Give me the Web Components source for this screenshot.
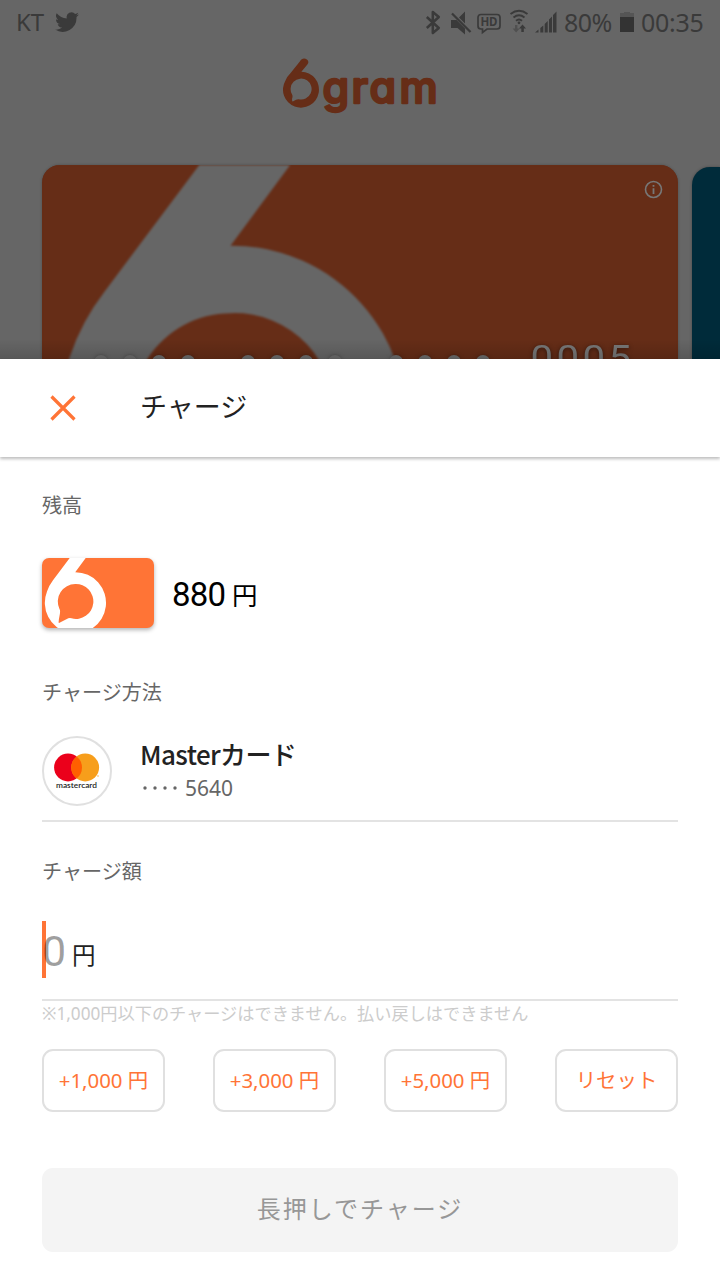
<!DOCTYPE html>
<html lang="ja">
<head>
<meta charset="utf-8">
<title>6gram</title>
<style>
body {
    margin: 0;
    background: #fff;
    color: #222;
    font-family: "Noto Sans", "Noto Sans CJK JP", sans-serif;
}
</style>
</head>
<body>
<charge-app></charge-app>

<script>
function define(name, html) {
    const template = document.createElement('template');
    template.innerHTML = html;
    customElements.define(name, class extends HTMLElement {
        constructor() {
            super();
            this.attachShadow({ mode: 'open' }).appendChild(template.content.cloneNode(true));
        }
    });
}

define('status-bar', `
<style>
:host {
    display: flex;
    align-items: center;
    height: 46px;
    padding: 0 16px;
    color: #3a3a3a;
    font-size: 25px;
    line-height: 44px;
}
svg { display: block; fill: currentColor; flex: none; }
span { height: 46px; white-space: nowrap; }
.carrier { width: 39px; font-size: 24px; }
.bird, .battery { margin-top: -2px; }
.space { flex: 1; }
.percent { margin-left: 1.5px; width: 56px; letter-spacing: -.5px; }
.time { margin-left: 7px; width: 63px; letter-spacing: -.3px; }
</style>
<span class="carrier">KT</span>
<svg class="bird" width="24" height="22" viewBox="0 0 24 22"><path d="M24 3.6a10 10 0 0 1-2.8.8 5 5 0 0 0 2.1-2.7 9 9 0 0 1-3.1 1.2 4.9 4.9 0 0 0-8.4 4.5A14 14 0 0 1 1.700 2.200a4.900 4.900 0 0 0 1.500 6.600A5 5 0 0 1 1 8.200a4.900 4.900 0 0 0 3.900 4.900 5 5 0 0 1-2.200.1 4.900 4.900 0 0 0 4.600 3.400A10 10 0 0 1 0 18.600 14 14 0 0 0 21.500 6.100 10 10 0 0 0 24 3.600z"/></svg>
<span class="space"></span>
<svg width="138" height="30" viewBox="0 0 138 30">
    <g fill="none" stroke="#3a3a3a" stroke-width="2.500">
        <path d="M1.800 9l12 11-6 5V4l6 5-12 11" stroke-linejoin="round"/>
        <path d="M27 5.500l18.500 18.500" stroke-width="2.300"/>
        <path d="M56 6.500h16q3 0 3 3v8.500q0 3-3 3H62l-4.500 3.500v-3.500H56q-3 0-3-3v-8.500q0-3 3-3z" stroke-width="1.700"/>
        <path d="M85.500 6q8.500-6.500 17 0M88.500 9.500q5.500-4.500 11 0M91 12.700q3-2.500 6 0" stroke-width="1.900"/>
    </g>
    <path d="M26 12h5.500l8.500 8.500v6l-7.500-6.500H26zM34 9.500l6-6v12z"/>
    <circle cx="94" cy="14.800" r="1.400"/>
    <path d="M96.300 24v-3.500H94l3.500-4 3.500 4h-2.200V24z"/>
    <path fill="#505050" d="M90 17h2.400v3.500h2.200l-3.500 4-3.500-4H90z"/>
    <path d="M110 24.500l3.500-3v3zM115.300 20l3-2.500v7h-3zM119.700 16l3-3v11.500h-3zM124 11.500l3-3v16h-3zM128 7l3.500-3.500v21H128z"/>
    <text x="64" y="18" text-anchor="middle" font-size="11.500" font-weight="700" font-family="Noto Sans" textLength="17">HD</text>
</svg>
<span class="percent">80%</span>
<svg class="battery" width="14" height="20" viewBox="0 0 14 20"><path fill="#555" d="M0 1h4V0h6v1h4v4H0z"/><path fill="#333" d="M0 5h14v15H0z"/></svg>
<span class="time">00:35</span>
`);

define('brand-logo', `
<style>
:host { display: block; height: 62px; text-align: center; }
svg { display: block; margin: 0 auto; }
text {
    font-family: Inter, "Noto Sans", sans-serif;
    font-weight: 500;
    font-feature-settings: "cv11" 1;
}
</style>
<svg width="160" height="62" viewBox="280 57 160 62" fill="#662d17">
    <g transform="translate(281.500 63.300) scale(.588)">
        <path fill-rule="evenodd" d="M31.500-3.500C35-11 45-8.500 45.700-2Q45.700 0 44 2L33.800 14.200A30.600 30.600 0 1 1 6.600 29.500Q9 23 15.500 16.500zM20.500 31.500A17.800 17.800 0 0 0 18 53Q19.500 55 18 60.500Q17.500 66 20 64.500Q26 60.500 29 61A17.800 17.800 0 1 0 20.500 31.500z"/>
    </g>
    <text x="322.500 351.500 369.500 399.500" y="102.500" font-size="43" stroke="#662d17" stroke-width="2.400" stroke-linejoin="round">gram</text>
</svg>
`);

// the cropped "6" with a speech bubble for its counter
define('card-art', `
<style>
:host { display: block; overflow: hidden; background: var(--card, #ff7436); }
svg { display: block; width: 100%; aspect-ratio: 112 / 70; fill: var(--mark, #fff); }
</style>
<svg viewBox="0 0 112 70">
    <path fill-rule="evenodd" d="M27.700 0H43.700L33.200 14.200A30.600 30.600 0 1 1 5 33.500Q7 27.500 11 22.300zM33.200 26.100A17.400 17.400 0 0 0 17.300 50.500C19.300 54 17 57.500 16.600 64.200Q16.600 65.600 18 64.600L26.300 60.200Q28 59.600 29.500 60.300A17.400 17.400 0 1 0 33.200 26.100z"/>
</svg>
`);

define('home-backdrop', `
<style>
:host {
    display: flex;
    flex-direction: column;
    position: relative;
    height: 359px;
    overflow: hidden;
    background: #666;
}
brand-logo { margin-top: 11px; }
.cards { display: flex; gap: 14px; margin: 46px 0 0 42px; height: 194px; }
.card {
    position: relative;
    flex: none;
    width: 636px;
    border-radius: 18px 18px 0 0;
    overflow: hidden;
    background: #662d17;
    box-shadow: 0 0 3px rgba(0, 0, 0, .25);
}
card-art { --card: #662d17; --mark: #666; filter: blur(.8px); }
.info { position: absolute; top: 15px; right: 15px; }
.digits { position: absolute; left: 0; top: 170px; filter: drop-shadow(0 1px 2px rgba(0, 0, 0, .5)); }
.digits text {
    font: 400 35px Roboto, sans-serif;
    letter-spacing: 2.950px;
    fill: #777;
}
.next { flex: none; width: 28px; margin-top: 2px; border-radius: 18px 0 0 0; background: #002b3a; box-shadow: 0 0 3px rgba(0, 0, 0, .3); }
.shade { position: absolute; left: 0; right: 0; bottom: 0; height: 20px; background: linear-gradient(transparent, rgba(0, 0, 0, .14)); }
</style>
<status-bar></status-bar>
<brand-logo></brand-logo>
<div class="cards">
    <div class="card">
        <card-art></card-art>
        <svg class="info" width="19" height="19" viewBox="0 0 19 19">
            <circle cx="9.500" cy="9.500" r="8" fill="none" stroke="#777" stroke-width="1.600"/>
            <path d="M8.600 5h1.800v1.800H8.600zM8.600 8.300h1.800v5.700H8.600z" fill="#777"/>
        </svg>
        <svg class="digits" width="636" height="24" viewBox="42 335 636 24">
            <g fill="#6d6d6d">
                <circle cx="101" cy="362" r="7"/><circle cx="130" cy="362" r="7"/><circle cx="159" cy="362" r="7"/><circle cx="188" cy="362" r="7"/>
                <circle cx="248" cy="362" r="7"/><circle cx="277" cy="362" r="7"/><circle cx="306" cy="362" r="7"/><circle cx="335" cy="362" r="7"/>
                <circle cx="396" cy="362" r="7"/><circle cx="425" cy="362" r="7"/><circle cx="454" cy="362" r="7"/><circle cx="483" cy="362" r="7"/>
            </g>
            <text transform="translate(530.500 370) scale(1.150 1)">0005</text>
        </svg>
    </div>
    <div class="next"></div>
</div>
<div class="shade"></div>
`);

define('sheet-header', `
<style>
:host {
    display: flex;
    align-items: center;
    position: relative;
    height: 98px;
    padding-left: 50px;
    background: #fff;
    box-shadow: 0 2px 3px rgba(0, 0, 0, .26);
    font-size: 27px;
}
svg { flex: none; margin-right: 64px; }
span { line-height: 40px; margin-top: -2px; }
</style>
<svg width="26" height="26" viewBox="0 0 26 26"><path d="M1.500 1.500l23 23M24.500 1.500l-23 23" stroke="#ff7436" stroke-width="3.200"/></svg>
<span><slot></slot></span>
`);

define('section-label', `
<style>
:host {
    display: block;
    height: 30px;
    line-height: 32px;
    font-size: 20.100px;
    color: #666;
}
</style>
<slot></slot>
`);

define('balance-row', `
<style>
:host {
    display: flex;
    align-items: center;
    height: 70px;
    color: #000;
    font-family: Roboto, "Noto Sans CJK JP", sans-serif;
}
card-art { width: 112px; height: 70px; border-radius: 7px; box-shadow: 0 2px 4px rgba(0, 0, 0, .3); }
.amount { margin-left: 18px; width: 60px; font-size: 33px; letter-spacing: -.8px; line-height: 48px; padding-top: 3px; }
.yen { font: 25.500px/48px "Noto Sans CJK JP", sans-serif; padding-top: 1px; }
</style>
<card-art></card-art>
<span class="amount"><slot></slot></span>
<span class="yen">円</span>
`);

define('payment-method', `
<style>
:host {
    display: flex;
    height: 84px;
    border-bottom: 2px solid #e3e3e3;
}
.brand {
    box-sizing: border-box;
    width: 70px;
    height: 70px;
    border: 2px solid #e0e0e0;
    border-radius: 50%;
    margin-right: 28px;
}
.brand svg { display: block; }
.name {
    font: 500 26px/35px "Noto Sans CJK JP", sans-serif;
    letter-spacing: -.6px;
    color: #222;
}
.number {
    display: flex;
    align-items: center;
    height: 34px;
    font-size: 21px;
    color: #666;
}
.number svg { margin-right: 7px; }
</style>
<div class="brand">
    <svg width="66" height="66" viewBox="44 738 66 66">
        <circle cx="68" cy="767.500" r="13.900" fill="#eb001b"/>
        <circle cx="85.200" cy="767.500" r="13.900" fill="#f79e1b"/>
        <path d="M76.600 756.500a13.900 13.900 0 0 1 0 22 13.900 13.900 0 0 1 0-22z" fill="#ff5f00"/>
        <circle cx="98" cy="776" r=".7" fill="#f79e1b"/>
        <text x="56" y="788" font-family="Lato" font-size="7.500" font-weight="600" textLength="41" lengthAdjust="spacingAndGlyphs" fill="#222">mastercard</text>
    </svg>
</div>
<div>
    <div class="name"><slot name="name"></slot></div>
    <div class="number">
        <svg width="38" height="6" viewBox="0 0 38 6" fill="#666"><circle cx="5" cy="3" r="1.700"/><circle cx="15" cy="3" r="1.700"/><circle cx="25" cy="3" r="1.700"/><circle cx="35" cy="3" r="1.700"/></svg>
        <slot></slot>
    </div>
</div>
`);

define('amount-field', `
<style>
:host {
    display: flex;
    height: 78px;
    border-bottom: 2px solid #e3e3e3;
}
.caret { width: 4px; height: 57px; margin-right: -4px; background: #ff7436; }
.value { width: 30px; font: 400 43px/61px Roboto, sans-serif; color: rgba(0, 0, 0, .38); position: relative; }
.yen { font-size: 23.500px; line-height: 68px; }
</style>
<span class="caret"></span>
<span class="value"><slot></slot></span>
<span class="yen">円</span>
`);

define('quick-button', `
<style>
:host {
    box-sizing: border-box;
    width: 123px;
    height: 63px;
    border: 2px solid #e0e0e0;
    border-radius: 11px;
    line-height: 58px;
    font-size: 20.400px;
    text-align: center;
    white-space: nowrap;
    color: #ff7436;
    display: block;
}
</style>
<slot></slot>
`);

define('hold-button', `
<style>
:host {
    display: block;
    height: 84px;
    border-radius: 11px;
    background: #f4f4f4;
    color: #979797;
    font-size: 24px;
    line-height: 82px;
    letter-spacing: 2px;
    text-align: center;
}
</style>
<slot></slot>
`);

define('charge-app', `
<style>
:host { display: block; width: 720px; height: 1280px; overflow: hidden; }
.sheet { display: flex; flex-direction: column; padding: 33px 42px 0; }
balance-row { margin: 38px 0 49px; }
payment-method { margin: 29px 0 34px; }
amount-field { margin-top: 35px; }
.note { height: 26px; line-height: 26px; font-size: 17.200px; color: #ccc; white-space: nowrap; }
.buttons { display: flex; justify-content: space-between; margin: 22px 0 56px; }
</style>
<home-backdrop></home-backdrop>
<sheet-header>チャージ</sheet-header>
<div class="sheet">
    <section-label>残高</section-label>
    <balance-row>880</balance-row>
    <section-label>チャージ方法</section-label>
    <payment-method><span slot="name">Masterカード</span>5640</payment-method>
    <section-label>チャージ額</section-label>
    <amount-field>0</amount-field>
    <div class="note">※1,000円以下のチャージはできません。払い戻しはできません</div>
    <div class="buttons">
        <quick-button>+1,000 円</quick-button>
        <quick-button>+3,000 円</quick-button>
        <quick-button>+5,000 円</quick-button>
        <quick-button>リセット</quick-button>
    </div>
    <hold-button>長押しでチャージ</hold-button>
</div>
`);
</script>
</body>
</html>
